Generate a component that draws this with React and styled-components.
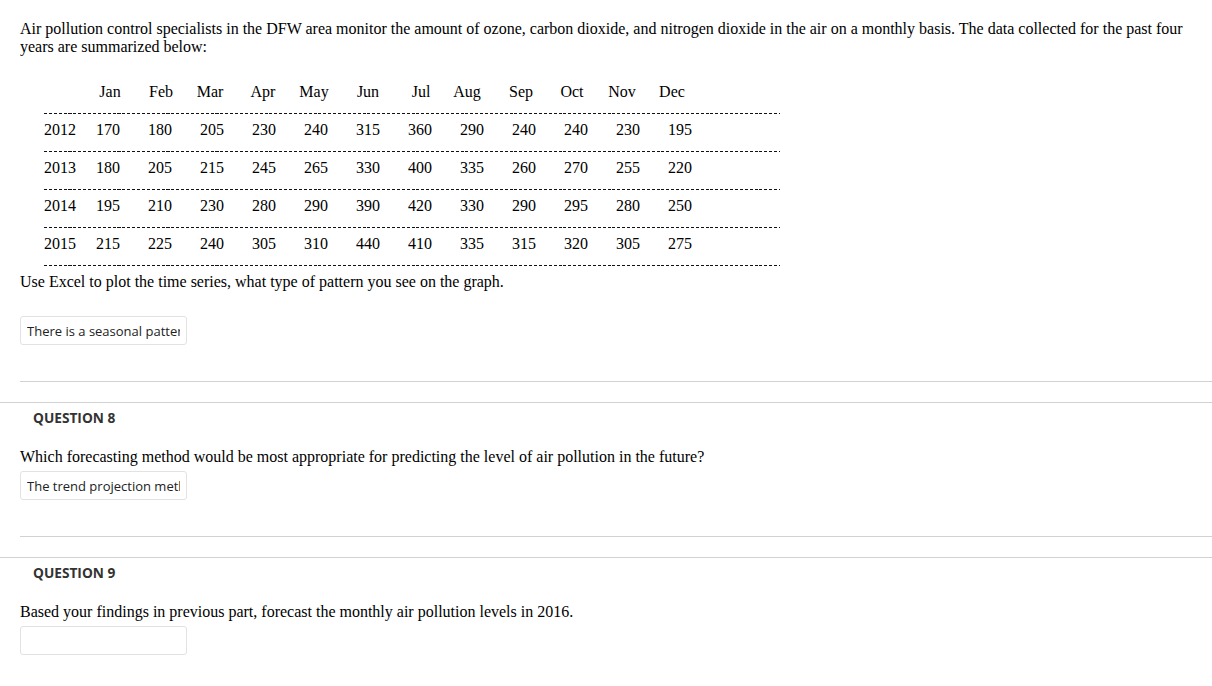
import React from "react";
import styled, { createGlobalStyle } from "styled-components";

const GlobalStyle = createGlobalStyle`
  html, body {
    margin: 0;
    padding: 0;
    background: #ffffff;
  }
  body {
    font-family: "Liberation Serif", "Times New Roman", serif;
    color: #000;
  }
`;

const months = ["Jan", "Feb", "Mar", "Apr", "May", "Jun", "Jul", "Aug", "Sep", "Oct", "Nov", "Dec"];

const headerCols = "40px 52px 50px 48px 58px 44px 64px 42px 50px 58px 44px 56px 44px 1fr";
const dataCols = "38px repeat(12, 52px) 1fr";

const readings = [
  { year: "2012", values: [170, 180, 205, 230, 240, 315, 360, 290, 240, 240, 230, 195] },
  { year: "2013", values: [180, 205, 215, 245, 265, 330, 400, 335, 260, 270, 255, 220] },
  { year: "2014", values: [195, 210, 230, 280, 290, 390, 420, 330, 290, 295, 280, 250] },
  { year: "2015", values: [215, 225, 240, 305, 310, 440, 410, 335, 315, 320, 305, 275] },
];

const Page = styled.div`
  width: 1212px;
  min-height: 686px;
`;

const QuestionBody = styled.div`
  padding: ${(p) => (p.$first ? "20px" : "0")} 0 0 20px;
`;

const Prose = styled.p`
  margin: 0;
  padding-right: 20px;
  font-size: 16px;
  line-height: 18px;
`;

const DataTable = styled.div`
  margin: 27px 0 0 24px;
  width: 736px;
  font-size: 16px;
`;

const TableRow = styled.div`
  display: grid;
  grid-template-columns: ${(p) => p.$cols};
  height: 18px;
  line-height: 18px;
  margin-bottom: 12px;
`;

const Cell = styled.span`
  text-align: ${(p) => (p.$left ? "left" : "center")};
`;

const DashLine = styled.div`
  height: 1px;
  margin-bottom: 7px;
  background: repeating-linear-gradient(to right, #111 0 3px, transparent 3px 4.9px);
`;

const AnswerBox = styled.input`
  display: block;
  box-sizing: border-box;
  width: 167px;
  height: 29px;
  margin-top: ${(p) => p.$gap}px;
  padding: 0 6px;
  border: 1px solid #e2e2e2;
  border-radius: 3px;
  background: #fff;
  font-family: "Open Sans", sans-serif;
  font-size: 13px;
  color: #222;
  outline: none;
`;

const QuestionFooter = styled.div`
  margin: 36px 0 0 20px;
  border-top: 1px solid #d2d2d2;
`;

const QuestionSection = styled.section`
  margin-top: 20px;
  border-top: 1px solid #d2d2d2;
  padding-top: 7px;
`;

const QuestionTitle = styled.h3`
  margin: 0 0 22px 33px;
  font-family: "Open Sans", sans-serif;
  font-weight: 700;
  font-size: 13.7px;
  line-height: 16px;
  color: #333;
`;

function PollutionTable() {
  return (
    <DataTable>
      <TableRow $cols={headerCols}>
        <Cell $left />
        {months.map((m) => (
          <Cell key={m}>{m}</Cell>
        ))}
      </TableRow>
      <DashLine />
      {readings.map((r) => (
        <React.Fragment key={r.year}>
          <TableRow $cols={dataCols}>
            <Cell $left>{r.year}</Cell>
            {r.values.map((v, i) => (
              <Cell key={i}>{v}</Cell>
            ))}
          </TableRow>
          <DashLine />
        </React.Fragment>
      ))}
    </DataTable>
  );
}

export default function App() {
  return (
    <Page>
      <GlobalStyle />
      <QuestionBody $first>
        <Prose>
          Air pollution control specialists in the DFW area monitor the amount of ozone, carbon dioxide, and
          nitrogen dioxide in the air on a monthly basis. The data collected for the past four years are
          summarized below:
        </Prose>
        <PollutionTable />
        <Prose>Use Excel to plot the time series, what type of pattern you see on the graph.</Prose>
        <AnswerBox $gap={25} readOnly defaultValue="There is a seasonal pattern" />
      </QuestionBody>
      <QuestionFooter />

      <QuestionSection>
        <QuestionTitle>QUESTION 8</QuestionTitle>
        <QuestionBody>
          <Prose>Which forecasting method would be most appropriate for predicting the level of air pollution in the future?</Prose>
          <AnswerBox $gap={5} readOnly defaultValue="The trend projection method" />
        </QuestionBody>
        <QuestionFooter />
      </QuestionSection>

      <QuestionSection>
        <QuestionTitle>QUESTION 9</QuestionTitle>
        <QuestionBody>
          <Prose>Based your findings in previous part, forecast the monthly air pollution levels in 2016.</Prose>
          <AnswerBox $gap={5} readOnly defaultValue="" />
        </QuestionBody>
      </QuestionSection>
    </Page>
  );
}
